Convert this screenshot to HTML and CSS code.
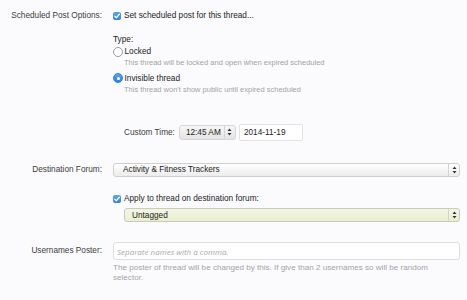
FILE: index.html
```html
<!DOCTYPE html>
<html lang="en">
<head>
    <meta charset="UTF-8">
    <meta name="viewport" content="width=device-width, initial-scale=1.0">
    <title>Scheduled Post Options</title>
    <link rel="stylesheet" href="styles.css">
</head>
<body>

    <form class="options-form">

        <!-- Scheduled post -->
        <div class="form-row">
            <div class="row-label">Scheduled Post Options:</div>
            <div class="row-input">
                <label class="check-line">
                    <span class="check-box">
                        <svg viewBox="0 0 8 8" width="8" height="8"><path d="M1.8 4.2 L3.3 5.7 L6.3 2.3" fill="none" stroke="#fff" stroke-width="1.3" stroke-linecap="round" stroke-linejoin="round"/></svg>
                    </span>
                    Set scheduled post for this thread...
                </label>

                <div class="type-block">
                    <div class="type-title">Type:</div>
                    <label class="radio-line"><span class="radio-circle"></span>Locked</label>
                    <p class="hint indent">This thread will be locked and open when expired scheduled</p>
                    <label class="radio-line"><span class="radio-circle selected"></span>Invisible thread</label>
                    <p class="hint indent">This thread won't show public until expired scheduled</p>
                </div>

                <div class="custom-time">
                    <span class="custom-label">Custom Time:</span>
                    <div class="select-box time-select">
                        <span class="select-text">12:45 AM</span>
                        <span class="select-arrow">
                            <svg viewBox="0 0 5 8" width="5" height="8"><path d="M2.5 0.5 L4.5 3 L0.5 3 Z M2.5 7.5 L4.5 5 L0.5 5 Z" fill="#333"/></svg>
                        </span>
                    </div>
                    <div class="date-input">2014-11-19</div>
                </div>
            </div>
        </div>

        <!-- Destination forum -->
        <div class="form-row destination-row">
            <div class="row-label select-label">Destination Forum:</div>
            <div class="row-input">
                <div class="select-box wide-select">
                    <span class="select-text">Activity &amp; Fitness Trackers</span>
                    <span class="select-arrow">
                        <svg viewBox="0 0 5 8" width="5" height="8"><path d="M2.5 0.5 L4.5 3 L0.5 3 Z M2.5 7.5 L4.5 5 L0.5 5 Z" fill="#333"/></svg>
                    </span>
                </div>
            </div>
        </div>

        <!-- Apply prefix -->
        <div class="form-row apply-row">
            <div class="row-label"></div>
            <div class="row-input">
                <label class="check-line">
                    <span class="check-box">
                        <svg viewBox="0 0 8 8" width="8" height="8"><path d="M1.8 4.2 L3.3 5.7 L6.3 2.3" fill="none" stroke="#fff" stroke-width="1.3" stroke-linecap="round" stroke-linejoin="round"/></svg>
                    </span>
                    Apply to thread on destination forum:
                </label>
                <div class="select-box prefix-select">
                    <span class="select-text">Untagged</span>
                    <span class="select-arrow">
                        <svg viewBox="0 0 5 8" width="5" height="8"><path d="M2.5 0.5 L4.5 3 L0.5 3 Z M2.5 7.5 L4.5 5 L0.5 5 Z" fill="#333"/></svg>
                    </span>
                </div>
            </div>
        </div>

        <!-- Usernames poster -->
        <div class="form-row poster-row">
            <div class="row-label input-label">Usernames Poster:</div>
            <div class="row-input">
                <input type="text" class="text-input" placeholder="Separate names with a comma.">
                <p class="hint poster-hint">The poster of thread will be changed by this. If give than 2 usernames so will be random selector.</p>
            </div>
        </div>

    </form>

</body>
</html>
```

FILE: styles.css
```css
body {
    font-family: "Liberation Sans", Arial, sans-serif;
    font-size: 8.25px;
    color: #222;
    background-color: #fbfbfe;
    margin: 0;
    padding: 0;
}

.options-form {
    padding-top: 10px;
}

.form-row {
    display: grid;
    grid-template-columns: 102px 347px;
    column-gap: 11px;
}

.row-label {
    text-align: right;
    color: #3c3c3c;
    line-height: 11px;
}

.select-label {
    line-height: 14px;
}

.input-label {
    line-height: 17px;
}

.check-line,
.radio-line {
    display: flex;
    align-items: center;
    height: 11px;
    line-height: 11px;
}

.check-box {
    width: 8px;
    height: 8px;
    border-radius: 2px;
    background: linear-gradient(#5aa5f5, #2f7fe6);
    margin-right: 3px;
    display: flex;
}

.type-block {
    margin-top: 12.5px;
}

.type-title {
    line-height: 11px;
}

.radio-line {
    margin-top: 1.7px;
}

.radio-circle {
    width: 8px;
    height: 8px;
    border: 1px solid #9a9a9a;
    border-radius: 50%;
    background-color: #fff;
    margin-right: 1.5px;
    display: flex;
    align-items: center;
    justify-content: center;
}

.radio-circle.selected {
    border-color: #2f7fe6;
    background: linear-gradient(#5aa5f5, #2f7fe6);
}

.radio-circle.selected::after {
    content: "";
    width: 3px;
    height: 3px;
    border-radius: 50%;
    background-color: #fff;
}

.hint {
    font-size: 7.5px;
    line-height: 10px;
    color: #a3a3a3;
    margin: 1px 0 4.5px;
}

.indent {
    padding-left: 11px;
}

.custom-time {
    display: flex;
    align-items: center;
    height: 17px;
    margin-top: 29px;
    padding-left: 11px;
}

.custom-label {
    color: #3c3c3c;
    margin-right: 4px;
}

.select-box {
    display: flex;
    align-items: center;
    border: 1px solid #cfcfcf;
    border-radius: 3px;
    background: linear-gradient(#ffffff, #ececec);
    box-sizing: border-box;
}

.select-text {
    flex: 1;
    white-space: nowrap;
}

.select-arrow {
    display: flex;
    align-items: center;
    justify-content: center;
    width: 10px;
    height: 100%;
    border-left: 1px solid #d4d4d4;
}

.time-select {
    width: 57px;
    height: 15px;
    background: linear-gradient(#f6f6f6, #e4e4e4);
    border-color: #d6d6d6;
}

.time-select .select-text {
    padding-left: 6px;
}

.date-input {
    width: 64px;
    height: 17px;
    line-height: 15px;
    margin-left: 3px;
    padding-left: 4px;
    box-sizing: border-box;
    border: 1px solid #e2e2e2;
    border-radius: 2px;
    background-color: #fff;
}

.destination-row {
    margin-top: 22px;
}

.wide-select {
    height: 14px;
}

.wide-select .select-text {
    padding-left: 9px;
}

.apply-row {
    margin-top: 16.5px;
}

.prefix-select {
    height: 14px;
    margin-top: 4.3px;
    margin-left: 11px;
    background: linear-gradient(#f4f6e4, #e9eed0);
    border-color: #c9ccb8;
}

.prefix-select .select-text {
    padding-left: 7px;
}

.poster-row {
    margin-top: 20px;
}

.text-input {
    display: block;
    width: 100%;
    height: 18px;
    box-sizing: border-box;
    margin: 0;
    padding: 0 3px;
    border: 1px solid #dedede;
    border-radius: 3px;
    background-color: #fff;
    font-family: "Open Sans", sans-serif;
    font-size: 8px;
    outline: none;
}

.text-input::placeholder {
    color: #aaa;
    font-style: italic;
}

.poster-hint {
    font-size: 8.1px;
    line-height: 10.5px;
    margin: 2.5px 0 0;
    padding-right: 8px;
}
```
